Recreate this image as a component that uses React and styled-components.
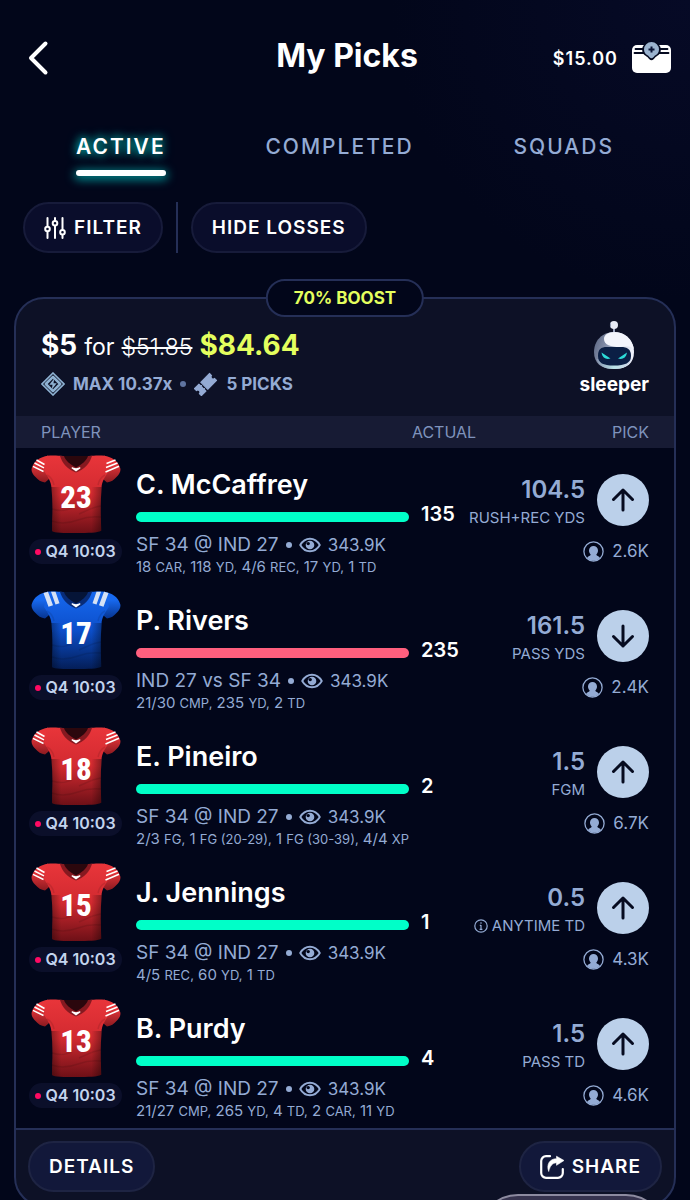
import React from "react";
import styled, { createGlobalStyle, css } from "styled-components";

const c = {
  bg: "#02061a",
  panel: "#0d1126",
  strip: "#171b34",
  line: "#252f57",
  white: "#ffffff",
  muted: "#94abd4",
  soft: "#7f93bd",
  pale: "#c3d4ee",
  lime: "#e4ff5e",
  win: "#00ffc8",
  loss: "#ff5f7e",
  live: "#ff0a63",
};

const GlobalStyle = createGlobalStyle`
  *, *::before, *::after { box-sizing: border-box; }
  body {
    margin: 0;
    background: ${c.bg};
    color: ${c.white};
    font-family: Inter, "Liberation Sans", sans-serif;
  }
  button { font: inherit; color: inherit; cursor: pointer; }
`;

const Screen = styled.div`
  height: 100vh;
  overflow-y: auto;
  scrollbar-width: none;
  background: radial-gradient(circle at 100% 0, #060a26 0, ${c.bg} 300px);
`;

const Header = styled.header`
  display: grid;
  grid-template-columns: 1fr auto 1fr;
  align-items: center;
  padding: 36px 19px 52px 23px;
`;

const BareButton = styled.button`
  display: inline-flex;
  align-items: center;
  gap: 14px;
  padding: 0;
  border: 0;
  background: none;
`;

const BackButton = styled(BareButton)`
  justify-self: start;
`;

const WalletButton = styled(BareButton)`
  justify-self: end;
  font-size: 18px;
  font-weight: 600;
  letter-spacing: 1px;
`;

const Title = styled.h1`
  margin: 0;
  font-size: 32px;
  line-height: 40px;
  font-weight: 700;
  padding-bottom: 4px;
`;

const Tabs = styled.nav`
  display: flex;
  justify-content: space-between;
  padding: 0 76px;
`;

const Tab = styled.button`
  padding: 0 0 14px;
  border: 0;
  background: none;
  color: ${c.muted};
  font-size: 21px;
  line-height: 30px;
  font-weight: 500;
  letter-spacing: 2px;
  ${(p) =>
    p.$active &&
    css`
      padding: 0;
      color: ${c.white};
      font-weight: 600;
      text-shadow: 0 0 8px #00b8b0, 0 0 12px #008f90;
      &::after {
        content: "";
        display: block;
        height: 6px;
        margin-top: 8px;
        border-radius: 3px;
        background: ${c.white};
        box-shadow: 0 2px 10px 2px #00858a;
      }
    `}
`;

const Filters = styled.div`
  display: flex;
  align-items: center;
  gap: 13px;
  padding: 26px 23px 44px;
`;

const Divider = styled.span`
  width: 2px;
  height: 51px;
  background: ${c.line};
`;

const Pill = styled.button`
  display: inline-flex;
  align-items: center;
  justify-content: center;
  gap: 8px;
  height: 51px;
  padding: 0 19px;
  border: 2px solid ${(p) => (p.$raised ? "#1e2443" : "#171b3a")};
  border-radius: 26px;
  background: ${(p) => (p.$raised ? "#12183a" : "#0a0d2b")};
  font-size: 19px;
  font-weight: 600;
  letter-spacing: 1px;
`;

const Card = styled.section`
  position: relative;
  margin: 0 14px;
  border: 2px solid ${c.line};
  border-radius: 30px;
  background: ${c.panel};
`;

const BoostBadge = styled.div`
  position: absolute;
  top: -20px;
  left: 50%;
  transform: translateX(-50%);
  padding: 0 26px;
  border: 2px solid ${c.line};
  border-radius: 19px;
  background: ${c.bg};
  color: ${c.lime};
  font-size: 17px;
  line-height: 34px;
  font-weight: 700;
  white-space: nowrap;
`;

const Entry = styled.div`
  display: flex;
  justify-content: space-between;
  padding: 22px 25px 20px;
`;

const Payout = styled.p`
  display: flex;
  align-items: baseline;
  gap: 7px;
  margin: 7px 0 8px;
  font-size: 23px;
  line-height: 34px;
  font-weight: 400;
`;

const Amount = styled.strong`
  font-size: 28px;
  font-weight: 700;
  color: ${(p) => (p.$boosted ? c.lime : c.white)};
`;

const OldAmount = styled.s`
  font-weight: 300;
  text-decoration-thickness: 2px;
`;

const EntryMeta = styled.div`
  display: flex;
  align-items: center;
  gap: 8px;
  color: ${c.muted};
  font-size: 17px;
  line-height: 24px;
  font-weight: 700;
`;

const MetaDot = styled.span`
  width: 6px;
  height: 6px;
  border-radius: 50%;
  background: #5f74a0;
`;

const Brand = styled.div`
  display: flex;
  flex-direction: column;
  align-items: center;
  font-size: 19px;
  line-height: 22px;
  font-weight: 700;
  gap: 5px;
`;

const Picks = styled.table`
  display: block;
  border-spacing: 0;
`;

const Section = styled.tbody`
  display: block;
  background: ${c.bg};
`;

const HeadSection = styled.thead`
  display: block;
  background: ${c.strip};
`;

const rowGrid = css`
  display: grid;
  grid-template-columns: minmax(0, 1fr) 46px 182px;
`;

const HeadRow = styled.tr`
  ${rowGrid}
  padding: 0 25px;
`;

const HeadCell = styled.th`
  display: flex;
  justify-content: ${(p) => p.$align || "flex-start"};
  padding: 0;
  color: ${c.soft};
  font-size: 16px;
  line-height: 32px;
  font-weight: 400;
  white-space: nowrap;
`;

const Row = styled.tr`
  ${rowGrid}
  height: 136px;
  padding: 0 25px 0 13px;
`;

const PlayerCell = styled.td`
  display: flex;
  gap: 14px;
  padding: 0 12px 0 0;
`;

const JerseyColumn = styled.div`
  display: flex;
  flex-direction: column;
  align-items: center;
  gap: 6px;
  flex: 0 0 93px;
  min-width: 0;
  padding-top: 7px;
`;

const Clock = styled.div`
  display: flex;
  align-items: center;
  gap: 4px;
  padding: 0 6px;
  border-radius: 13px;
  background: #0b0f2a;
  color: ${c.pale};
  font-size: 16px;
  line-height: 25px;
  font-weight: 600;
  white-space: nowrap;
`;

const LiveDot = styled.span`
  width: 6px;
  height: 6px;
  border-radius: 50%;
  background: ${c.live};
`;

const PlayerBody = styled.div`
  flex: 1;
  min-width: 0;
  padding-top: 19px;
  white-space: nowrap;
`;

const Name = styled.h2`
  margin: 0 0 9px;
  font-size: 27px;
  line-height: 36px;
  font-weight: 600;
`;

const Bar = styled.div`
  height: 10px;
  border-radius: 5px;
  background: ${(p) => (p.$lost ? c.loss : c.win)};
`;

const Game = styled.div`
  display: flex;
  align-items: center;
  gap: 7px;
  margin: 13px 0 2px;
  color: ${c.muted};
  font-size: 19px;
  line-height: 20px;
  font-weight: 400;
`;

const Views = styled.span`
  font-size: 17px;
`;

const GameDot = styled(MetaDot)`
  background: ${c.muted};
`;

const StatLine = styled.div`
  color: ${c.muted};
  font-size: 15px;
  line-height: 20px;
  small { font-size: 13px; }
`;

const ActualCell = styled.td`
  padding: 54px 0 0;
  font-size: 20px;
  line-height: 24px;
  font-weight: 600;
`;

const PickCell = styled.td`
  padding: 26px 0 0;
`;

const PickTop = styled.div`
  display: flex;
  justify-content: flex-end;
  gap: 12px;
  margin-bottom: 14px;
`;

const PickText = styled.div`
  display: flex;
  flex-direction: column;
  align-items: flex-end;
  gap: 2px;
  color: ${c.muted};
  white-space: nowrap;
`;

const PickValue = styled.span`
  font-size: 24px;
  line-height: 32px;
  font-weight: 600;
`;

const PickLabel = styled.span`
  display: flex;
  align-items: center;
  gap: 4px;
  font-size: 15px;
  line-height: 20px;
  font-weight: 400;
`;

const Direction = styled.span`
  display: flex;
  align-items: center;
  justify-content: center;
  flex: 0 0 52px;
  height: 52px;
  border-radius: 50%;
  background: #bbd0ea;
`;

const Followers = styled.div`
  display: flex;
  align-items: center;
  justify-content: flex-end;
  gap: 8px;
  margin-top: -2px;
  color: ${c.muted};
  font-size: 17px;
  line-height: 22px;
`;

const CardFooter = styled.footer`
  display: flex;
  justify-content: space-between;
  padding: 11px 12px 13px;
  border-top: 2px solid ${c.line};
`;

const FloatingBar = styled.div`
  position: fixed;
  right: 24px;
  bottom: -74px;
  width: 188px;
  height: 80px;
  border: 2px solid #8d8ba0;
  border-radius: 40px;
  background: #37344f;
`;

function BackIcon() {
  return (
    <svg width="30" height="36" viewBox="0 0 30 36" fill="none" stroke="#fff" strokeWidth="4" strokeLinecap="round" strokeLinejoin="round">
      <path d="M22.500 3.500 8 18l14.500 14.500" />
    </svg>
  );
}

function WalletIcon() {
  return (
    <svg width="39" height="32" viewBox="0 0 39 32" aria-hidden="true">
      <path d="M0 8a5 5 0 0 1 5-5h29a5 5 0 0 1 5 5v18a5 5 0 0 1-5 5H5a5 5 0 0 1-5-5z" fill="#fff" />
      <path d="M3.500 7h9.500M26 7h9.500M2.500 11h10.500M26 11h10.500" stroke="#050a20" strokeWidth="1.800" strokeLinecap="round" />
      <path d="M10.200 8a9.300 9.300 0 1 1 18.600 0c0 4-3 5.500-5.200 7-1.500 2-2.500 3.200-4.100 3.200s-2.600-1.200-4.100-3.200c-2.200-1.500-5.200-3-5.200-7z" fill="#050a20" />
      <path d="M12 7.500a7.500 7.500 0 1 1 15 0c0 3.500-2 5-4.300 6.300-1 1.700-2 2.400-3.200 2.400s-2.200-.7-3.200-2.400C14 12.500 12 11 12 7.500z" fill="#9bb3cf" />
      <path d="M19.500 4.500v6M16.500 7.500h6" stroke="#0a1436" strokeWidth="2" />
    </svg>
  );
}

function SlidersIcon() {
  return (
    <svg width="22" height="22" viewBox="0 0 22 22" fill="none" stroke="#fff" strokeWidth="2" strokeLinecap="round">
      <path d="M3.500 1v8M3.500 15v6M11 1v2.500M11 9v12M18.500 1v11.500M18.500 18v3" />
      <circle cx="3.500" cy="12" r="2.300" />
      <circle cx="11" cy="6.300" r="2.300" />
      <circle cx="18.500" cy="15.200" r="2.300" />
    </svg>
  );
}

function MaxIcon() {
  return (
    <svg width="24" height="24" viewBox="0 0 24 24" fill="none" stroke="#8fb3d3">
      <path d="M12 1 23 12 12 23 1 12z" strokeWidth="1.600" />
      <path d="M12 4.800 19.200 12 12 19.200 4.800 12z" strokeWidth="2.600" strokeLinejoin="round" fill="#0d1126" />
      <path d="M13.200 6.500 8.300 12.700h3.200l-.7 4.800 4.900-6.200h-3.200z" fill="#8fb3d3" stroke="none" />
    </svg>
  );
}

function TicketIcon() {
  return (
    <svg width="24" height="24" viewBox="0 0 24 24" fill="#94abd4" stroke="#94abd4" strokeWidth="1" strokeLinejoin="round">
      <g transform="rotate(-45 12 12)">
        <path d="M9.500 7h12.500v3a2 2 0 0 0 0 4v3H9.500z" />
        <path d="M.5 7h6.500v2l.8 1-.8 1v2l.8 1-.8 1v2H.5v-3a2 2 0 0 0 0-4z" />
      </g>
    </svg>
  );
}

function BotLogo() {
  return (
    <svg width="40" height="48" viewBox="0 0 40 48" aria-hidden="true">
      <defs>
        <linearGradient id="botShell" x1="0" y1="0" x2="1" y2="0.300">
          <stop offset="0" stopColor="#56617d" />
          <stop offset="0.450" stopColor="#8e99b3" />
          <stop offset="1" stopColor="#eef1fa" />
        </linearGradient>
        <linearGradient id="botBase" x1="0" y1="0" x2="1" y2="0">
          <stop offset="0" stopColor="#8796b1" />
          <stop offset="0.500" stopColor="#b9e3e8" />
          <stop offset="1" stopColor="#cfd5ea" />
        </linearGradient>
      </defs>
      <path d="M20 6v7" stroke="#9aa4bd" strokeWidth="2" />
      <circle cx="20" cy="4" r="4" fill="#e6eaf5" />
      <path d="M17 1.500a4 4 0 0 0 0 5.200z" fill="#8c96b0" />
      <path d="M20 11C8 11 0 20 0 31c0 11 7 17 20 17s20-6 20-17c0-11-8-20-20-20z" fill="url(#botShell)" />
      <path d="M2.500 38C5 45 11 48 20 48s15-3 17.500-10z" fill="url(#botBase)" />
      <path d="M20 11c11 0 18 7 20 17-4-4-9-2-14-2-9 0-16-2-16-8 0-4 4-7 10-7z" fill="#f3f5fc" />
      <path d="M4 35c0-7 3-9 9-9h14c6 0 10 2 10 9s-6 9.500-17 9.500S4 42 4 35z" fill="#0b1f45" />
      <path d="M7.500 31.500 16.500 37.500c-4 1.200-8 0-9-6zM33 31.500 24 37.500c4 1.200 8 0 9-6z" fill="#2cdcd9" />
    </svg>
  );
}

function EyeIcon() {
  return (
    <svg width="22" height="16" viewBox="0 0 22 16" fill="none" stroke="#94abd4">
      <path d="M1.200 8C3.500 4 7 1.700 11 1.700S18.500 4 20.800 8C18.500 12 15 14.300 11 14.300S3.500 12 1.200 8z" strokeWidth="1.900" strokeLinejoin="round" />
      <circle cx="11" cy="8" r="4.300" fill="#94abd4" stroke="none" />
      <circle cx="9.200" cy="6.600" r="1.700" fill="#02061a" stroke="none" />
    </svg>
  );
}

function PersonIcon() {
  return (
    <svg width="21" height="21" viewBox="0 0 21 21" fill="none">
      <circle cx="10.500" cy="10.500" r="9.600" stroke="#94abd4" strokeWidth="1.300" />
      <path d="M10.500 5a4.500 4.500 0 0 1 4.500 4.500c0 1.900-.8 3-1.700 4 .2 1.500 2.600 1.500 3.700 3.500a9 9 0 0 1-13 0c1.100-2 3.500-2 3.700-3.500-.9-1-1.700-2.100-1.700-4A4.500 4.500 0 0 1 10.500 5z" fill="#94abd4" />
    </svg>
  );
}

function InfoIcon() {
  return (
    <svg width="14" height="14" viewBox="0 0 14 14" fill="none" stroke="#94abd4">
      <circle cx="7" cy="7" r="6.200" strokeWidth="1.200" />
      <path d="M7 3.200v1.600M7 6v4.500M5.800 6.300H7M5.600 10.400h2.800" strokeWidth="1.200" />
    </svg>
  );
}

function ArrowIcon({ down }) {
  return (
    <svg width="24" height="26" viewBox="0 0 24 26" fill="none" stroke="#060b20" strokeWidth="3" strokeLinecap="round" strokeLinejoin="round" role="img" aria-label={down ? "Under" : "Over"}>
      <path d={down ? "M12 3v20M2.500 13.500 12 23l9.500-9.500" : "M12 23V3M2.500 12.500 12 3l9.500 9.500"} />
    </svg>
  );
}

function ShareIcon() {
  return (
    <svg width="24" height="24" viewBox="0 0 24 24" fill="none">
      <path d="M10 1.200H6A4.800 4.800 0 0 0 1.200 6v12A4.800 4.800 0 0 0 6 22.800h12a4.800 4.800 0 0 0 4.800-4.800v-4" stroke="#fff" strokeWidth="2.200" strokeLinecap="round" />
      <path d="M16.500 1.200 24 5.500l-7.500 4.800V7.800c-4 .2-6.300 2.700-7.800 8.700-2.600-7 1-12.800 7.800-12.800z" fill="#fff" stroke="#fff" strokeWidth="0.600" strokeLinejoin="round" />
    </svg>
  );
}

const kits = {
  red: { top: "#e8353a", mid: "#d22a30", low: "#6e1017", collar: "#861920", neck: "#2b070d", sleeve: "#8a1a20" },
  blue: { top: "#1769f0", mid: "#0c4fcb", low: "#041e58", collar: "#082c79", neck: "#051437", sleeve: "#07348f" },
};

function Jersey({ team, number }) {
  const k = kits[team];
  return (
    <svg width="90" height="78" viewBox="0 0 90 78" role="img" aria-label={`Jersey ${number}`}>
      <defs>
        <linearGradient id={`${team}Body`} x1="0" y1="0" x2="0" y2="1">
          <stop offset="0" stopColor={k.top} />
          <stop offset="0.500" stopColor={k.mid} />
          <stop offset="1" stopColor={k.low} />
        </linearGradient>
        <linearGradient id={`${team}Shade`} x1="0" y1="0" x2="1" y2="0">
          <stop offset="0" stopColor="#000" stopOpacity="0.350" />
          <stop offset="0.200" stopColor="#000" stopOpacity="0" />
          <stop offset="0.800" stopColor="#000" stopOpacity="0" />
          <stop offset="1" stopColor="#000" stopOpacity="0.350" />
        </linearGradient>
        <linearGradient id={`${team}Sleeve`} x1="0" y1="0" x2="0" y2="1">
          <stop offset="0.300" stopColor={k.top} />
          <stop offset="1" stopColor={k.sleeve} />
        </linearGradient>
      </defs>
      <path d="M17 .8C9 2 3 6 .8 13c-.9 3 .8 6 3.200 8.500C7 25 10 27 14 27.500L24 19zM73 .8C81 2 87 6 89.200 13c.9 3-.8 6-3.200 8.500C83 25 80 27 76 27.500L66 19z" fill={`url(#${team}Sleeve)`} />
      <path d="M16 .8C24 .3 27 .8 32 1h26c5-.2 8-.7 16-.2l4 15c-4 6-7 10-7.500 17-.5 10-1.200 20-.6 31l.3 12C66 78 58 78 45 78s-21 0-24-2l.2-12c.7-11 .1-21-.7-31-.5-7-3.500-11-7.500-17z" fill={`url(#${team}Body)`} />
      <path d="M20 32h50.500c-.5 12-1.200 22-.6 32l.3 12C66 78 58 78 45 78s-21 0-24-2l.2-12c.7-11 .1-22-1.200-32z" fill={`url(#${team}Shade)`} />
      <path d="M21 66c8 3 18 2 26-1s15-4 23-3M21 54c10 3 15 1 20-1M70 51c-8 1-13 4-22 8M16 20c4 2 6 5 7 10M74 20c-4 2-6 5-7 10" stroke="#000" strokeOpacity="0.100" strokeWidth="1.500" fill="none" />
      <path d="M29 1h32c-2 7-8 14-16 16.500C37 15 31 8 29 1z" fill={k.collar} />
      <path d="M33 1h24c-1 4-6 8.500-12 11.500C39 9.500 34 5 33 1z" fill={k.neck} />
      <path d="M41 12c2 1.500 6 1.500 8 0l.5 1.200L45 16.500l-4.500-3.300z" fill="#fff" />
      {team === "red" ? (
        <path d="M5.500 5 13.500 9.500M3.500 8 13 12.800M2 11.300 12.500 16.500M84.500 5 75.500 8.500M86.500 8 75 12.500M88 11.300 74.500 17" stroke="#fff" strokeWidth="1.500" fill="none" />
      ) : (
        <path d="M12.500 2 17 .8l5 13.500-4.500 1.400zM20 .8h4.500l4 11.500-4 1.300zM77.500 2 73 .8l-5 13.500 4.500 1.400zM70 .8h-4.500l-4 11.500 4 1.300z" fill="#d6e2f5" />
      )}
      <text x="45" y="53" textAnchor="middle" fill="#fff" fontFamily='"Roboto Condensed", Roboto, "Liberation Sans", sans-serif' fontWeight="800" fontSize="31">
        {number}
      </text>
    </svg>
  );
}

const SF = "SF 34 @ IND 27";
const IND = "IND 27 vs SF 34";

const picks = [
  { name: "C. McCaffrey", team: "red", number: 23, game: SF, actual: 135, line: "104.5", market: "RUSH+REC YDS", followers: "2.6K",
    stats: [["18", "CAR"], ["118", "YD"], ["4/6", "REC"], ["17", "YD"], ["1", "TD"]] },
  { name: "P. Rivers", team: "blue", number: 17, game: IND, actual: 235, line: "161.5", market: "PASS YDS", followers: "2.4K", down: true, lost: true,
    stats: [["21/30", "CMP"], ["235", "YD"], ["2", "TD"]] },
  { name: "E. Pineiro", team: "red", number: 18, game: SF, actual: 2, line: "1.5", market: "FGM", followers: "6.7K",
    stats: [["2/3", "FG"], ["1", "FG (20-29)"], ["1", "FG (30-39)"], ["4/4", "XP"]] },
  { name: "J. Jennings", team: "red", number: 15, game: SF, actual: 1, line: "0.5", market: "ANYTIME TD", followers: "4.3K", info: true,
    stats: [["4/5", "REC"], ["60", "YD"], ["1", "TD"]] },
  { name: "B. Purdy", team: "red", number: 13, game: SF, actual: 4, line: "1.5", market: "PASS TD", followers: "4.6K",
    stats: [["21/27", "CMP"], ["265", "YD"], ["4", "TD"], ["2", "CAR"], ["11", "YD"]] },
];

function PickRow({ pick }) {
  return (
    <Row>
      <PlayerCell>
        <JerseyColumn>
          <Jersey team={pick.team} number={pick.number} />
          <Clock><LiveDot />Q4 10:03</Clock>
        </JerseyColumn>
        <PlayerBody>
          <Name>{pick.name}</Name>
          <Bar $lost={pick.lost} />
          <Game>
            {pick.game}
            <GameDot />
            <EyeIcon />
            <Views>343.9K</Views>
          </Game>
          <StatLine>
            {pick.stats.map(([value, label], i) => (
              <React.Fragment key={i}>
                {i > 0 && " "}
                {value} <small>{label}{i < pick.stats.length - 1 && ","}</small>
              </React.Fragment>
            ))}
          </StatLine>
        </PlayerBody>
      </PlayerCell>
      <ActualCell>{pick.actual}</ActualCell>
      <PickCell>
        <PickTop>
          <PickText>
            <PickValue>{pick.line}</PickValue>
            <PickLabel>
              {pick.info && <InfoIcon />}
              {pick.market}
            </PickLabel>
          </PickText>
          <Direction><ArrowIcon down={pick.down} /></Direction>
        </PickTop>
        <Followers><PersonIcon />{pick.followers}</Followers>
      </PickCell>
    </Row>
  );
}

export default function App() {
  return (
    <Screen>
      <GlobalStyle />
      <Header>
        <BackButton aria-label="Back"><BackIcon /></BackButton>
        <Title>My Picks</Title>
        <WalletButton>$15.00<WalletIcon /></WalletButton>
      </Header>
      <Tabs>
        <Tab $active aria-current="page">ACTIVE</Tab>
        <Tab>COMPLETED</Tab>
        <Tab>SQUADS</Tab>
      </Tabs>
      <Filters>
        <Pill><SlidersIcon />FILTER</Pill>
        <Divider />
        <Pill>HIDE LOSSES</Pill>
      </Filters>
      <Card>
        <BoostBadge>70% BOOST</BoostBadge>
        <Entry>
          <div>
            <Payout>
              <Amount>$5</Amount>
              <span>for</span>
              <OldAmount>$51.85</OldAmount>
              <Amount $boosted>$84.64</Amount>
            </Payout>
            <EntryMeta>
              <MaxIcon />
              MAX 10.37x
              <MetaDot />
              <TicketIcon />
              5 PICKS
            </EntryMeta>
          </div>
          <Brand>
            <BotLogo />
            sleeper
          </Brand>
        </Entry>
        <Picks>
          <HeadSection>
            <HeadRow>
              <HeadCell>PLAYER</HeadCell>
              <HeadCell $align="center">ACTUAL</HeadCell>
              <HeadCell $align="flex-end">PICK</HeadCell>
            </HeadRow>
          </HeadSection>
          <Section>
            {picks.map((pick) => <PickRow key={pick.name} pick={pick} />)}
          </Section>
        </Picks>
        <CardFooter>
          <Pill $raised>DETAILS</Pill>
          <Pill $raised><ShareIcon />SHARE</Pill>
        </CardFooter>
      </Card>
      <FloatingBar />
    </Screen>
  );
}
